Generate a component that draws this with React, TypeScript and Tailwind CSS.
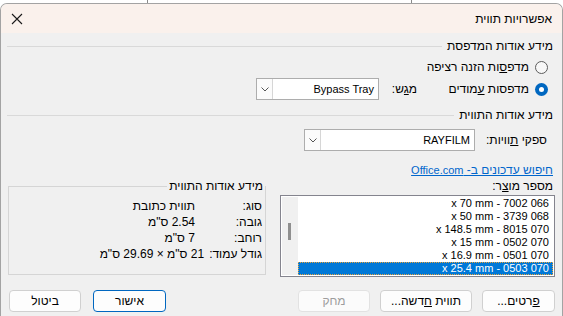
import React from 'react';

const items = [
  'x 70 mm - 7002 066',
  'x 50 mm - 3739 068',
  'x 148.5 mm - 8015 070',
  'x 15 mm - 0502 070',
  'x 16.9 mm - 0501 070',
  'x 25.4 mm - 0503 070',
];

function Chevron() {
  return (
    <svg width="8" height="5" viewBox="0 0 8 5" fill="none">
      <path d="M0.5 0.5 L4 4 L7.5 0.5" stroke="#555" strokeWidth="1" />
    </svg>
  );
}

function Combo({ className, text }: { className: string; text: string }) {
  return (
    <div className={`${className} h-[22px] border border-[#adadad] bg-white flex`} dir="ltr">
      <div className="w-[16px] h-full border-r border-[#d6d6d6] bg-[#fbfbfb] flex items-center justify-center">
        <Chevron />
      </div>
      <div className="flex-1 flex items-center justify-end pr-[4px] text-[11px] text-black">{text}</div>
    </div>
  );
}

function Radio({ checked }: { checked?: boolean }) {
  if (checked) {
    return (
      <div className="w-[13px] h-[13px] rounded-full bg-[#0067c0] flex items-center justify-center shrink-0">
        <div className="w-[5px] h-[5px] rounded-full bg-white" />
      </div>
    );
  }
  return <div className="w-[13px] h-[13px] rounded-full border border-[#5c5c5c] bg-[#f7f7f7] shrink-0" />;
}

function SectionHeader({ title }: { title: string }) {
  return (
    <div className="h-[14px] flex items-center gap-[5px] mr-[2px]">
      <span className="leading-[14px] whitespace-nowrap">{title}</span>
      <div className="flex-1 h-px bg-[#d9d9d9]" />
    </div>
  );
}

function Button({ className, children, primary, disabled }: { className: string; children: React.ReactNode; primary?: boolean; disabled?: boolean }) {
  const tone = primary
    ? 'border-[#0067c0] text-black bg-[#fdfdfd]'
    : disabled
      ? 'border-[#e2e2e2] text-[#9d9d9d] bg-[#fbfbfb]'
      : 'border-[#d0d0d0] text-black bg-[#fdfdfd]';
  return (
    <div className={`${className} h-[22px] rounded-[4px] border ${tone} flex items-center justify-center`}>
      {children}
    </div>
  );
}

export default function App() {
  return (
    <div className="w-[563px] h-[316px] overflow-hidden bg-white flex flex-col text-[12px] leading-[14px] text-black font-['Liberation_Sans','DejaVu_Sans',sans-serif]">
      <div className="h-[3px] flex shrink-0">
        <div className="w-[147px]" />
        <div className="w-[264px] border-l border-[#8a8a8a]" />
        <div className="flex-1 border-l border-[#8a8a8a]" />
      </div>

      <div dir="rtl" className="flex-1 flex flex-col rounded-t-[7px] border border-b-0 border-[#a3a3a3] bg-[#f0f0f0] overflow-hidden">
        <div className="h-[29px] shrink-0 bg-[#faf1ec] flex items-center justify-between pr-[10px] pl-[10px]">
          <span>אפשרויות תווית</span>
          <svg width="12" height="12" viewBox="0 0 12 12" fill="none">
            <path d="M1 1 L11 11 M11 1 L1 11" stroke="#1a1a1a" strokeWidth="1.1" />
          </svg>
        </div>

        <div className="flex flex-col pr-[7px] pl-[6px]">
          <div className="mt-[6px]">
            <SectionHeader title="מידע אודות המדפסת" />
          </div>

          <div className="mt-[6px] h-[16px] flex items-center gap-[6px] mr-[7px]">
            <Radio />
            <span>
              מדפ<span className="underline">ס</span>ות הזנה רציפה
            </span>
          </div>

          <div className="mt-[3px] h-[22px] flex items-center mr-[2px]">
            <div className="w-[136px] flex items-center gap-[6px] pr-[5px]">
              <Radio checked />
              <span>
                מדפסות <span className="underline">ע</span>מודים
              </span>
            </div>
            <div className="w-[38px]">
              מ<span className="underline">ג</span>ש:
            </div>
            <Combo className="w-[123px]" text="Bypass Tray" />
          </div>

          <div className="mt-[8px]">
            <SectionHeader title="מידע אודות התווית" />
          </div>

          <div className="mt-[7px] h-[22px] flex items-center mr-[2px]">
            <div className="w-[78px] pr-[6px]">
              ספקי <span className="underline">ת</span>וויות:
            </div>
            <Combo className="w-[171px]" text="RAYFILM" />
          </div>

          <div className="mt-[12px] h-[14px] mr-[2px] flex">
            <span className="text-[#0066cc] underline">
              חיפוש עדכונים ב- <span className="text-[11px]">Office.com</span>
            </span>
          </div>

          <div className="mt-[2px] flex gap-[14px]">
            <div className="w-[275px] flex flex-col">
              <div className="h-[14px] pr-[2px]">
                מספר מו<span className="underline">צ</span>ר:
              </div>
              <div className="mt-[2px] h-[82px] border border-[#84848e] bg-white p-[1px] flex" dir="ltr">
                <div className="w-[16px] h-full bg-[#f0f0f0] pt-[26px] pl-[6px]">
                  <div className="w-[3px] h-[17px] bg-[#8f8f8f]" />
                </div>
                <div className="flex-1 flex flex-col text-[11px]">
                  {items.map((item, i) =>
                    i === items.length - 1 ? (
                      <div key={item} className="h-[13px] leading-[11px] bg-[#0078d7] text-white border border-dotted border-[#e8a33c] text-right pr-[3px]">
                        {item}
                      </div>
                    ) : (
                      <div key={item} className="h-[13px] leading-[13px] text-right pr-[4px]">
                        {item}
                      </div>
                    )
                  )}
                </div>
              </div>
            </div>

            <fieldset className="w-[258px] h-[96px] border border-[#d5d5d5] px-0 pt-[5px]">
              <legend className="pl-[2px] pr-[2px] leading-[14px]">מידע אודות התווית</legend>
              <div className="pr-[3px] flex flex-col">
                <div className="h-[16px] flex items-center">
                  <div className="w-[67px]">סוג:</div>
                  <div>תווית כתובת</div>
                </div>
                <div className="h-[16px] flex items-center">
                  <div className="w-[67px]">גובה:</div>
                  <div>2.54 ס"מ</div>
                </div>
                <div className="h-[16px] flex items-center">
                  <div className="w-[67px]">רוחב:</div>
                  <div>7 ס"מ</div>
                </div>
                <div className="h-[16px] flex items-center gap-[5px]">
                  <div>גודל עמוד:</div>
                  <div>21 ס"מ × 29.69 ס"מ</div>
                </div>
              </div>
            </fieldset>
          </div>

          <div className="mt-[13px] flex justify-between pl-[2px]">
            <div className="flex gap-[10px]">
              <Button className="w-[73px]">
                <span>
                  <span className="underline">פ</span>רטים...
                </span>
              </Button>
              <Button className="w-[92px]">
                <span>
                  תווית <span className="underline">ח</span>דשה...
                </span>
              </Button>
              <Button className="w-[72px]" disabled>
                מחק
              </Button>
            </div>
            <div className="flex gap-[12px]">
              <Button className="w-[73px]" primary>
                אישור
              </Button>
              <Button className="w-[72px]">ביטול</Button>
            </div>
          </div>
        </div>
      </div>
    </div>
  );
}
